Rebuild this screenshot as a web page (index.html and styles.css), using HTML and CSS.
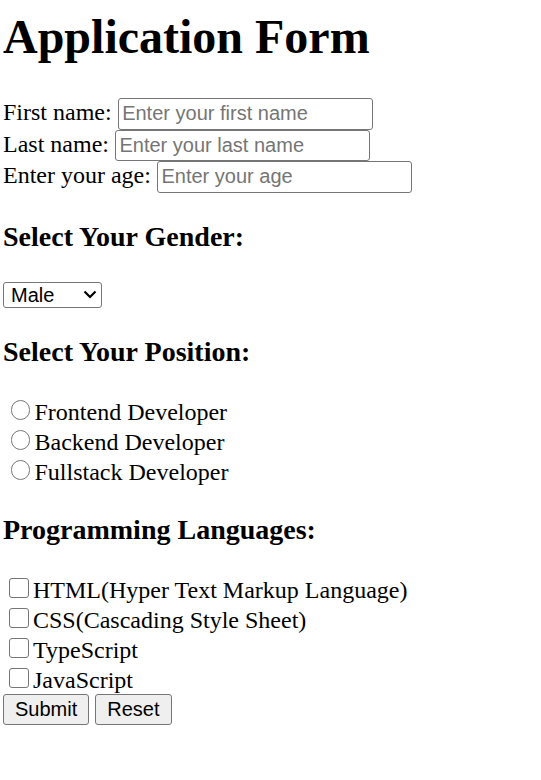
FILE: index.html
```html
<!DOCTYPE html>
<html lang="en">
<head>
<meta charset="utf-8">
<title>Application Form</title>
<link rel="stylesheet" href="styles.css">
</head>
<body>
<h1 class="title">Application Form</h1>
<form class="form">
<label class="label" for="first">First name:</label> <input class="field" id="first" type="text" placeholder="Enter your first name"><br>
<label class="label" for="last">Last name:</label> <input class="field" id="last" type="text" placeholder="Enter your last name"><br>
<label class="label" for="age">Enter your age:</label> <input class="field" id="age" type="text" placeholder="Enter your age"><br>
<h3 class="section">Select Your Gender:</h3>
<span class="select-wrap"><select class="select"><option>Male</option><option>Female</option><option>Other</option></select><svg class="chevron" width="14" height="9" viewBox="0 0 14 9"><path d="M1.5 1.5 L7 7 L12.5 1.5" fill="none" stroke="#000" stroke-width="2.2"/></svg></span>
<h3 class="section">Select Your Position:</h3>
<input class="radio" type="radio" name="pos" id="fe"><label for="fe">Frontend Developer</label><br>
<input class="radio" type="radio" name="pos" id="be"><label for="be">Backend Developer</label><br>
<input class="radio" type="radio" name="pos" id="fs"><label for="fs">Fullstack Developer</label><br>
<h3 class="section">Programming Languages:</h3>
<input class="check" type="checkbox" id="html"><label for="html">HTML(Hyper Text Markup Language)</label><br>
<input class="check" type="checkbox" id="css"><label for="css">CSS(Cascading Style Sheet)</label><br>
<input class="check" type="checkbox" id="ts"><label for="ts">TypeScript</label><br>
<input class="check" type="checkbox" id="js"><label for="js">JavaScript</label><br>
<button class="btn" type="submit">Submit</button> <button class="btn" type="reset">Reset</button>
</form>
</body>
</html>
```
FILE: styles.css
```css
html { background: #fff; }
body {
  margin: 0 3px;
  font-family: "Liberation Serif", "Times New Roman", serif;
  font-size: 24px;
  color: #000;
}
.title {
  font-size: 48px;
  font-weight: bold;
  margin: 9px 0 34px;
}
.section {
  font-size: 28px;
  font-weight: bold;
  margin: 28px 0;
}
.field {
  box-sizing: border-box;
  width: 255px;
  height: 31.5px;
  padding: 3.25px 3.5px;
  border: 1px solid #767676;
  border-radius: 3px;
  font-family: "Liberation Sans", Arial, sans-serif;
  font-size: 20px;
  color: #000;
  background: #fff;
  margin: 0;
}
.field::placeholder { color: #757575; opacity: 1; }
.select-wrap {
  position: relative;
  display: inline-block;
}
.select {
  appearance: none;
  -webkit-appearance: none;
  box-sizing: border-box;
  width: 99px;
  height: 26px;
  padding: 0 0 0 7px;
  border: 1px solid #767676;
  border-radius: 3px;
  background: #fff;
  font-family: "Liberation Sans", Arial, sans-serif;
  font-size: 20px;
  color: #000;
  margin: 0;
}
.chevron {
  position: absolute;
  right: 5px;
  top: 9px;
  pointer-events: none;
}
.radio {
  appearance: none;
  -webkit-appearance: none;
  box-sizing: border-box;
  width: 19.5px;
  height: 19.5px;
  margin: 4.5px 4.5px 0 7.5px;
  border: 1px solid #767676;
  border-radius: 50%;
  background: #fff;
}
.check {
  appearance: none;
  -webkit-appearance: none;
  box-sizing: border-box;
  width: 19.5px;
  height: 19.5px;
  margin: 4.5px 4.5px 0 6px;
  border: 1px solid #767676;
  border-radius: 3px;
  background: #fff;
}
.btn {
  box-sizing: border-box;
  height: 31.5px;
  padding: 1.5px 11px;
  border: 1px solid #767676;
  border-radius: 3px;
  background: #efefef;
  font-family: "Liberation Sans", Arial, sans-serif;
  font-size: 20px;
  color: #000;
  margin: 0;
}
```
